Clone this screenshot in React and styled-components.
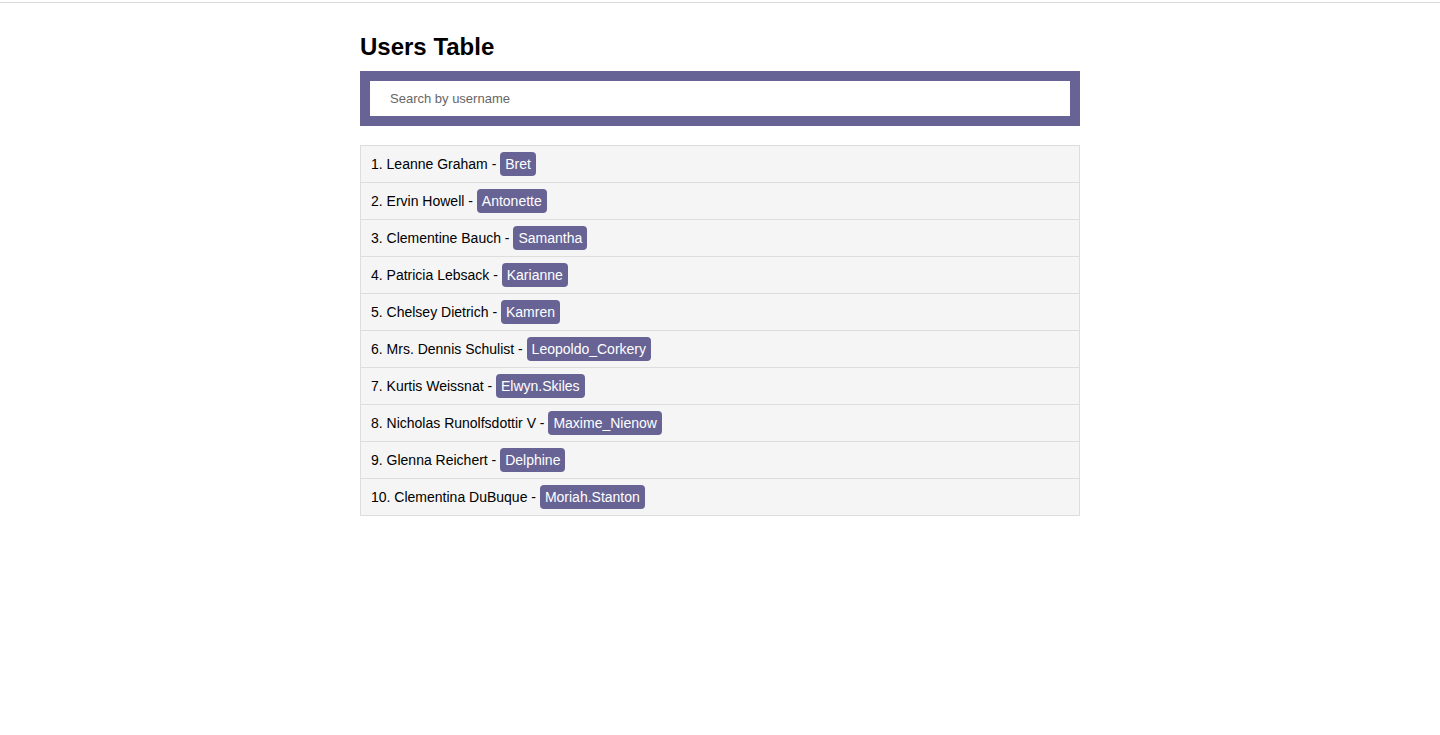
import React, { useState } from "react";
import styled, { createGlobalStyle } from "styled-components";

const Global = createGlobalStyle`
  html, body { margin: 0; padding: 0; background: #fff; }
  body { font-family: "Liberation Sans", Arial, sans-serif; color: #000; }
`;

const TopRule = styled.div`
  height: 2px;
  border-bottom: 1px solid #dcdcdc;
`;

const Container = styled.main`
  width: 720px;
  margin: 0 auto;
  padding-top: 30px;
`;

const Title = styled.h1`
  margin: 0 0 10px;
  font-size: 24px;
  line-height: 28px;
  font-weight: bold;
`;

const SearchBar = styled.div`
  background: #676395;
  padding: 10px;
  margin-bottom: 19px;
`;

const SearchInput = styled.input`
  box-sizing: border-box;
  display: block;
  width: 100%;
  height: 35px;
  border: none;
  outline: none;
  padding: 0 20px;
  font-family: "Liberation Sans", Arial, sans-serif;
  font-size: 13px;
  color: #333;
  background: #fff;
  &::placeholder { color: #666; }
`;

const List = styled.ul`
  list-style: none;
  margin: 0;
  padding: 0;
  border: 1px solid #dddddd;
  border-bottom: none;
`;

const Row = styled.li`
  display: flex;
  align-items: center;
  height: 36px;
  padding: 0 10px;
  background: #f5f5f5;
  border-bottom: 1px solid #dddddd;
  font-size: 14px;
  white-space: pre;
`;

const Badge = styled.span`
  display: inline-block;
  background: #676395;
  color: #fff;
  border-radius: 4px;
  padding: 0 5px;
  height: 24px;
  line-height: 24px;
  font-size: 14px;
`;

const users = [
  ["Leanne Graham", "Bret"],
  ["Ervin Howell", "Antonette"],
  ["Clementine Bauch", "Samantha"],
  ["Patricia Lebsack", "Karianne"],
  ["Chelsey Dietrich", "Kamren"],
  ["Mrs. Dennis Schulist", "Leopoldo_Corkery"],
  ["Kurtis Weissnat", "Elwyn.Skiles"],
  ["Nicholas Runolfsdottir V", "Maxime_Nienow"],
  ["Glenna Reichert", "Delphine"],
  ["Clementina DuBuque", "Moriah.Stanton"],
];

export default function App() {
  const [q, setQ] = useState("");
  const shown = users
    .map((u, i) => [i + 1, ...u])
    .filter(([, , un]) => un.toLowerCase().includes(q.toLowerCase()));
  return (
    <>
      <Global />
      <TopRule />
      <Container>
        <Title>Users Table</Title>
        <SearchBar>
          <SearchInput
            placeholder="Search by username"
            value={q}
            onChange={(e) => setQ(e.target.value)}
          />
        </SearchBar>
        <List>
          {shown.map(([n, name, un]) => (
            <Row key={n}>
              {`${n}. ${name} - `}
              <Badge>{un}</Badge>
            </Row>
          ))}
        </List>
      </Container>
    </>
  );
}
